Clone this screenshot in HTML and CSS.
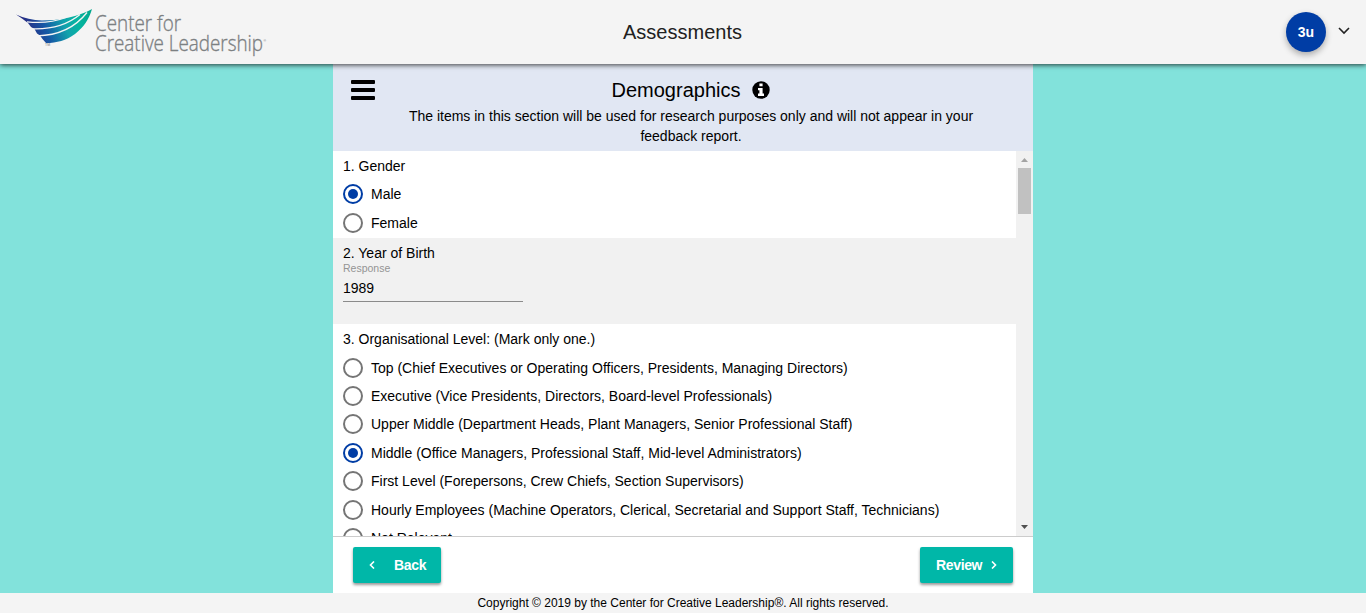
FILE: index.html
```html
<!DOCTYPE html>
<html lang="en">
<head>
<meta charset="utf-8">
<title>Assessments</title>
<link rel="stylesheet" href="styles.css">
</head>
<body>
<header class="topbar">
  <svg class="logo" width="256" height="48" viewBox="14 8 256 48" role="img" aria-label="Center for Creative Leadership">
    <defs>
      <linearGradient id="wing" gradientUnits="userSpaceOnUse" x1="30" y1="35" x2="92" y2="12">
        <stop offset="0" stop-color="#262f86"/>
        <stop offset=".25" stop-color="#1557a5"/>
        <stop offset=".55" stop-color="#12a3ac"/>
        <stop offset=".75" stop-color="#04b5a0"/>
        <stop offset="1" stop-color="#04a88d"/>
      </linearGradient>
    </defs>
    <path fill="url(#wing)" d="M16 14.500C24 18 33 20.500 42 20.500C51 20.500 58 19.500 64 18.500C75 16.500 85 13 92 9C89 19 84 27 75 34C66 40.500 57 43 46 43L42.500 39L40 35.500L37 33.500L34.500 29L31 27L28 23C24 20 20 17 16 14.500Z"/>
    <g class="logo-cuts">
      <path d="M27 21.800C42 23.500 54 22 66 17.500"/>
      <path d="M32 28.800C50 29.500 66 26 80 14.500"/>
      <path d="M37 35.800C57 35.500 74 29 87 12.500"/>
    </g>
    <text class="logo-tm" x="45" y="46">TM</text>
    <text class="logo-text" x="95" y="31" textLength="86" lengthAdjust="spacingAndGlyphs">Center for</text>
    <text class="logo-text" x="95" y="51" textLength="168" lengthAdjust="spacingAndGlyphs">Creative Leadership</text>
    <text class="logo-tm" x="263.500" y="42">®</text>
  </svg>
  <h1 class="title">Assessments</h1>
  <div class="account">
    <span class="avatar">3u</span>
    <svg class="caret" width="12" height="8" viewBox="0 0 12 8"><path d="M1 1l5 5 5-5"/></svg>
  </div>
</header>
<main class="panel">
  <section class="intro">
    <svg class="menu" width="24" height="20" viewBox="0 0 24 20"><rect width="24" height="4" rx="1"/><rect y="8" width="24" height="4" rx="1"/><rect y="16" width="24" height="4" rx="1"/></svg>
    <div class="intro-body">
      <h2 class="heading">Demographics
        <svg class="info" width="18" height="18" viewBox="0 0 18 18"><circle cx="9" cy="9" r="8.700"/><path fill="#fff" d="M7.400 2.600h3.200v2.600H7.400zM6 7h4.600v5.400H12V15H6v-2.600h1.400V9.300H6z"/></svg>
      </h2>
      <p class="note">The items in this section will be used for research purposes only and will not appear in your feedback report.</p>
    </div>
  </section>
  <div class="viewport">
    <div class="questions">
      <section class="question q1">
        <p class="prompt">1. Gender</p>
        <div class="option"><span class="radio on"></span>Male</div>
        <div class="option"><span class="radio"></span>Female</div>
      </section>
      <section class="question q2">
        <p class="prompt">2. Year of Birth</p>
        <div class="field"><span class="label">Response</span><span class="value">1989</span></div>
      </section>
      <section class="question q3">
        <p class="prompt">3. Organisational Level: (Mark only one.)</p>
        <div class="option"><span class="radio"></span>Top (Chief Executives or Operating Officers, Presidents, Managing Directors)</div>
        <div class="option"><span class="radio"></span>Executive (Vice Presidents, Directors, Board-level Professionals)</div>
        <div class="option"><span class="radio"></span>Upper Middle (Department Heads, Plant Managers, Senior Professional Staff)</div>
        <div class="option"><span class="radio on"></span>Middle (Office Managers, Professional Staff, Mid-level Administrators)</div>
        <div class="option"><span class="radio"></span>First Level (Forepersons, Crew Chiefs, Section Supervisors)</div>
        <div class="option"><span class="radio"></span>Hourly Employees (Machine Operators, Clerical, Secretarial and Support Staff, Technicians)</div>
        <div class="option"><span class="radio"></span>Not Relevant</div>
      </section>
    </div>
    <div class="scrollbar">
      <svg width="17" height="17"><path fill="#a3a3a3" d="M5 11h7L8.500 7z"/></svg>
      <span class="thumb"></span>
      <svg class="down" width="17" height="17"><path fill="#505050" d="M5 6h7l-3.500 4z"/></svg>
    </div>
  </div>
  <div class="actions">
    <button class="btn back"><svg width="6" height="8" viewBox="0 0 6 8"><path d="M5 .5L1.500 4 5 7.500"/></svg>Back</button>
    <button class="btn review">Review<svg width="6" height="8" viewBox="0 0 6 8"><path d="M1 .5L4.500 4 1 7.500"/></svg></button>
  </div>
</main>
<footer class="footer">Copyright © 2019 by the Center for Creative Leadership®. All rights reserved.</footer>
</body>
</html>
```
FILE: styles.css
```css
* { box-sizing: border-box; }
body {
  margin: 0;
  height: 613px;
  overflow: hidden;
  display: flex;
  flex-direction: column;
  align-items: center;
  background: #82e2db;
  color: #000;
  font: 14px/20px "Liberation Sans", Arial, sans-serif;
}
h1, h2, p { margin: 0; font-weight: 400; }
svg { display: block; flex: none; }
.topbar {
  position: relative;
  z-index: 1;
  width: 100%;
  height: 64px;
  flex: none;
  padding: 0 16px 0 14px;
  display: grid;
  grid-template-columns: 1fr auto 1fr;
  align-items: center;
  background: #f4f4f4;
  box-shadow: 0 1px 5px rgba(0,0,0,.75);
}
.logo { overflow: visible; }
.logo-cuts { fill: none; stroke: #f4f4f4; stroke-width: 1.3; }
.logo-text { font: 300 22px "Open Sans", sans-serif; fill: #7c8082; stroke: #7c8082; stroke-width: .35; }
.logo-tm { font: 3.500px "Liberation Sans", sans-serif; fill: #77797b; }
.title { font-size: 20px; line-height: 24px; color: #212121; padding-left: 1px; }
.account { justify-self: end; display: flex; align-items: center; gap: 12px; }
.avatar {
  width: 40px;
  height: 40px;
  border-radius: 50%;
  background: #003da5;
  color: #fff;
  font-weight: 700;
  line-height: 40px;
  text-align: center;
  box-shadow: 0 3px 6px rgba(0,0,0,.3);
}
.caret { fill: none; stroke: #222; stroke-width: 1.6; margin-bottom: 2px; }
.panel {
  width: 700px;
  height: 529px;
  display: flex;
  flex-direction: column;
  background: #fff;
}
.intro {
  height: 87px;
  flex: none;
  display: flex;
  padding: 16px 42px 0 18px;
  gap: 16px;
  background: #e1e7f3;
}
.intro-body { flex: 1; text-align: center; }
.heading {
  display: flex;
  justify-content: center;
  align-items: center;
  gap: 12px;
  font-size: 20px;
  line-height: 20px;
  padding-bottom: 6px;
}
.viewport { height: 386px; display: flex; border-bottom: 1px solid #ccc; overflow: hidden; }
.questions { flex: 1; }
.question { padding: 5px 10px 0; }
.q1 { height: 87px; }
.q2 { height: 86px; background: #f1f1f1; }
.prompt { height: 24px; }
.option { display: flex; align-items: center; height: 28.400px; gap: 8px; }
.radio {
  width: 20px;
  height: 20px;
  border: 2px solid #757575;
  border-radius: 50%;
  flex: none;
  padding: 3px;
}
.radio.on { border-color: #003da5; }
.radio.on::before { content: ""; display: block; width: 10px; height: 10px; border-radius: 50%; background: #003da5; }
.q2 .prompt { height: 20px; }
.q3 .prompt { height: 24.400px; }
.field { width: 180px; height: 40px; margin-top: -1px; border-bottom: 1px solid #8b8b8b; display: flex; flex-direction: column; }
.label { font-size: 10.500px; line-height: 12px; color: #949494; padding-bottom: 4px; }
.scrollbar { width: 17px; background: #f1f1f1; display: flex; flex-direction: column; align-items: center; }
.thumb { width: 13px; height: 46px; background: #c1c1c1; }
.down { margin-top: auto; }
.actions { display: flex; justify-content: space-between; padding: 10px 20px; }
.btn {
  height: 36px;
  border: 0;
  border-radius: 2px;
  background: #00b7a8;
  color: #fff;
  font: 700 14px/36px "Liberation Sans", Arial, sans-serif;
  letter-spacing: -.35px;
  padding: 0 16px;
  display: flex;
  align-items: center;
  box-shadow: 0 2px 3px rgba(0,0,0,.4);
}
.btn svg { fill: none; stroke: #fff; stroke-width: 1.600; }
.back { width: 88px; gap: 19px; }
.review { width: 93px; gap: 9px; }
.footer { width: 100%; height: 20px; background: #f4f4f4; font-size: 12px; line-height: 20px; text-align: center; }
```
